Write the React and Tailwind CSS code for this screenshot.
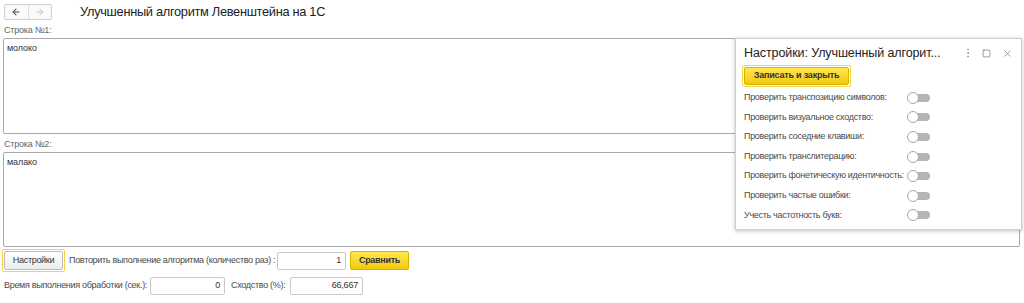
import { X, Square, EllipsisVertical, ArrowLeft, ArrowRight } from "lucide-react";

const font = { fontFamily: '"Liberation Sans", Arial, sans-serif' };

const options = [
  "Проверить транспозицию символов:",
  "Проверить визуальное сходство:",
  "Проверить соседние клавиши:",
  "Проверить транслитерацию:",
  "Проверить фонетическую идентичность:",
  "Проверить частые ошибки:",
  "Учесть частотность букв:",
];

function Toggle() {
  return (
    <div className="relative w-[23px] h-[12px] flex items-center">
      <div className="absolute left-[5px] right-0 h-[8px] rounded-r-full bg-[#b5b5b5]" />
      <div className="relative w-[12px] h-[12px] rounded-full bg-white border border-[#a8a8a8]" />
    </div>
  );
}

function Field({ value, width }) {
  return (
    <div
      className={`${width} h-[18px] border border-[#c8c8c8] rounded-[2px] bg-white flex items-center justify-end pr-[4px] text-[9px] tracking-[-0.2px] text-[#333]`}
    >
      {value}
    </div>
  );
}

export default function App() {
  return (
    <div className="relative w-[1024px] h-[303px] bg-white overflow-hidden text-[#333]" style={font}>
      {/* Header */}
      <div className="flex items-center h-[22px] pt-[1px]">
        <div className="ml-[4px] flex w-[48px] h-[16px] border border-[#cfcfcf] rounded-[2px] bg-[#fafafa]">
          <div className="flex-1 flex items-center justify-center border-r border-[#dcdcdc]">
            <ArrowLeft size={10} strokeWidth={2.5} className="text-[#444]" />
          </div>
          <div className="flex-1 flex items-center justify-center">
            <ArrowRight size={10} strokeWidth={2} className="text-[#bbb]" />
          </div>
        </div>
        <div className="ml-[28px] text-[12.8px] tracking-[-0.3px] text-[#222]">Улучшенный алгоритм Левенштейна на 1С</div>
      </div>

      {/* Строка 1 */}
      <div className="pl-[4px] h-[16px] pt-[4px] text-[9px] tracking-[-0.2px] text-[#666] leading-none">Строка №1:</div>
      <div className="ml-[3px] mr-[4px] h-[96px] border border-[#a9a9a9] rounded-[2px] px-[3px] pt-[5px] text-[9px] tracking-[-0.1px] leading-none">
        молоко
      </div>

      {/* Строка 2 */}
      <div className="pl-[4px] h-[18px] pt-[6px] text-[9px] tracking-[-0.2px] text-[#666] leading-none">Строка №2:</div>
      <div className="ml-[3px] mr-[4px] h-[95px] border border-[#a9a9a9] rounded-[2px] px-[3px] pt-[5px] text-[9px] tracking-[-0.1px] leading-none">
        малако
      </div>

      {/* Bottom row 1 */}
      <div className="flex items-center mt-[2px] h-[23px] pl-[2px] text-[9px] tracking-[-0.3px]">
        <div className="border border-[#f1d34a] rounded-[2px] p-[1px]">
          <div className="w-[59px] h-[19px] border border-[#bdbdbd] rounded-[2px] bg-gradient-to-b from-white to-[#ececec] flex items-center justify-center text-[#333]">
            Настройки
          </div>
        </div>
        <div className="ml-[4px] w-[203px] whitespace-nowrap text-[#4a4a4a]">Повторить выполнение алгоритма (количество раз) :</div>
        <div className="ml-[5px]">
          <Field value="1" width="w-[69px]" />
        </div>
        <div className="ml-[4px] w-[59px] h-[19px] rounded-[2px] border border-[#d6b400] bg-gradient-to-b from-[#ffe84a] to-[#f2c800] flex items-center justify-center font-bold text-[#333]">
          Сравнить
        </div>
      </div>

      {/* Bottom row 2 */}
      <div className="flex items-center mt-[4px] h-[19px] pl-[4px] text-[9px] tracking-[-0.3px]">
        <div className="w-[144px] whitespace-nowrap text-[#4a4a4a]">Время выполнения обработки (сек.):</div>
        <div className="ml-[2px]">
          <Field value="0" width="w-[75px]" />
        </div>
        <div className="ml-[6px] w-[55px] whitespace-nowrap text-[#4a4a4a]">Сходство (%):</div>
        <div className="ml-[4px]">
          <Field value="66,667" width="w-[73px]" />
        </div>
      </div>

      {/* Settings popup */}
      <div className="absolute left-[735px] top-[38px] w-[287px] h-[192px] bg-white border border-[#cfcfcf] shadow-[0_1px_4px_rgba(0,0,0,0.25)]">
        <div className="flex items-center h-[26px] pl-[8px] pr-[8px] pt-[2px]">
          <div className="flex-1 text-[12.5px] tracking-[-0.1px] text-[#222] whitespace-nowrap">Настройки: Улучшенный алгорит...</div>
          <EllipsisVertical size={12} className="text-[#999] mr-[8px]" strokeWidth={2} />
          <Square size={9} className="text-[#555] mr-[11px]" strokeWidth={1.5} />
          <X size={11} className="text-[#777]" strokeWidth={1.5} />
        </div>
        <div className="ml-[6px] w-fit border border-[#f1d34a] rounded-[2px] p-[1px]">
          <div className="w-[105px] h-[18px] rounded-[2px] border border-[#d6b400] bg-gradient-to-b from-[#ffe84a] to-[#f2c800] flex items-center justify-center text-[9px] tracking-[-0.2px] font-bold text-[#333] whitespace-nowrap">
            Записать и закрыть
          </div>
        </div>
        <div className="flex flex-col mt-[1px] pl-[8px]">
          {options.map((o) => (
            <div key={o} className="flex items-center h-[19.6px]">
              <div className="w-[163px] text-[9px] tracking-[-0.3px] text-[#4a4a4a] whitespace-nowrap">{o}</div>
              <Toggle />
            </div>
          ))}
        </div>
      </div>
    </div>
  );
}
